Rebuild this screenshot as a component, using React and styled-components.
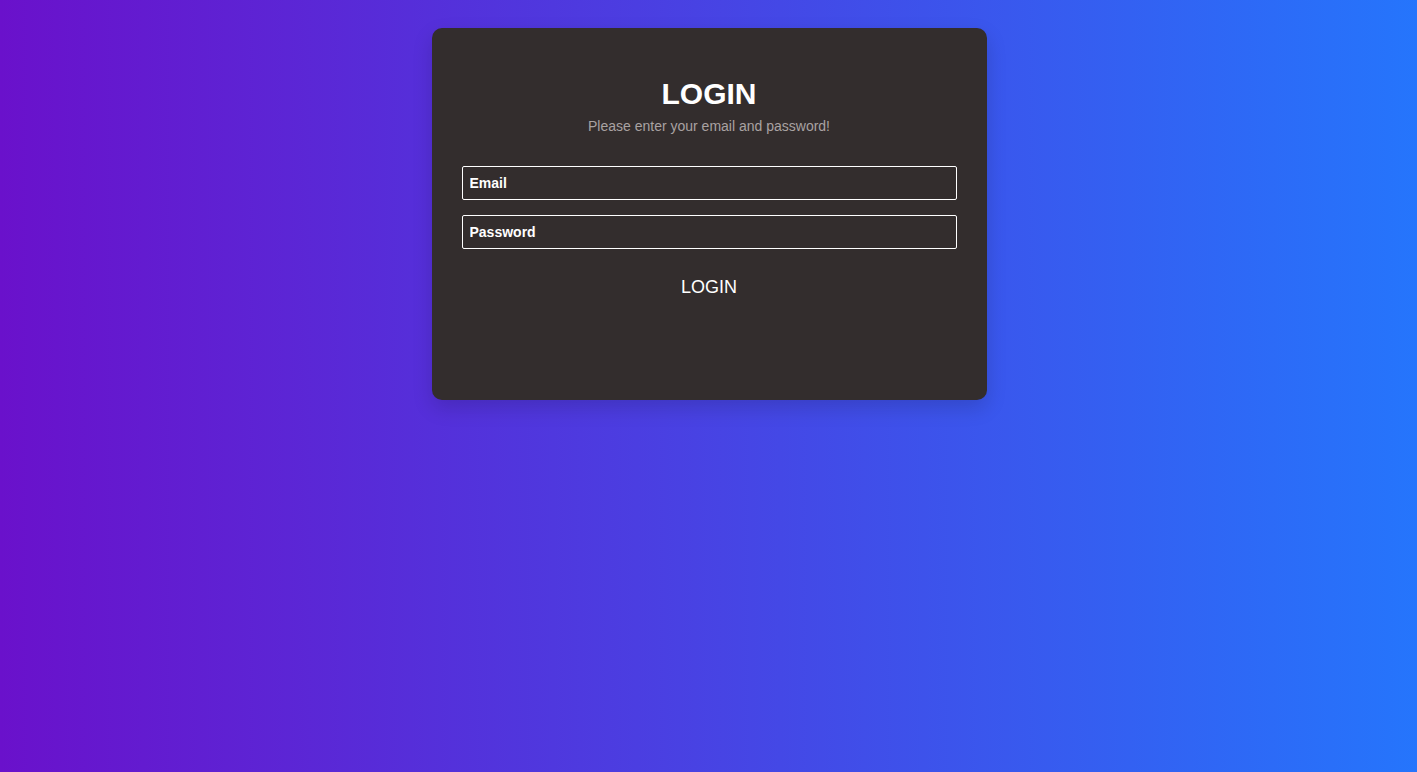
import styled, { createGlobalStyle } from 'styled-components';

const GlobalStyle = createGlobalStyle`
  html, body {
    margin: 0;
    padding: 0;
    height: 100%;
  }
  body {
    font-family: 'Liberation Sans', Arial, sans-serif;
  }
`;

const Page = styled.div`
  min-height: 100vh;
  width: 100%;
  background: linear-gradient(to right, #6a11cb, #2575fc);
  display: flex;
  justify-content: center;
  align-items: flex-start;
  padding: 28px 0 0 1px;
  box-sizing: border-box;
`;

const Card = styled.form`
  width: 555px;
  height: 372px;
  box-sizing: border-box;
  background: #332d2d;
  border-radius: 10px;
  box-shadow: 0 8px 20px rgba(0, 0, 0, 0.15);
  padding: 48px 30px 30px 30px;
  display: flex;
  flex-direction: column;
  align-items: stretch;
  color: #fff;
`;

const Title = styled.h2`
  margin: 0;
  text-align: center;
  font-size: 30px;
  font-weight: 700;
  line-height: 36px;
`;

const Subtitle = styled.p`
  margin: 6px 0 32px 0;
  text-align: center;
  font-size: 14px;
  line-height: 16px;
  color: #a9a2a2;
`;

const Field = styled.input`
  height: 34px;
  box-sizing: border-box;
  margin-bottom: 15px;
  padding: 0 7px;
  background: transparent;
  border: 1px solid #fff;
  border-radius: 2px;
  color: #fff;
  font-family: 'Liberation Sans', Arial, sans-serif;
  font-size: 14px;
  font-weight: 700;
  outline: none;
  &::placeholder {
    color: #fff;
    opacity: 1;
  }
`;

const Submit = styled.button`
  align-self: center;
  margin-top: 12px;
  background: none;
  border: none;
  color: #fff;
  font-family: 'Liberation Sans', Arial, sans-serif;
  font-size: 18px;
  line-height: 22px;
  padding: 0;
  cursor: pointer;
`;

function App() {
  return (
    <>
      <GlobalStyle />
      <Page>
        <Card onSubmit={e => e.preventDefault()}>
          <Title>LOGIN</Title>
          <Subtitle>Please enter your email and password!</Subtitle>
          <Field type="email" placeholder="Email" />
          <Field type="password" placeholder="Password" />
          <Submit type="submit">LOGIN</Submit>
        </Card>
      </Page>
    </>
  );
}

export default App;
